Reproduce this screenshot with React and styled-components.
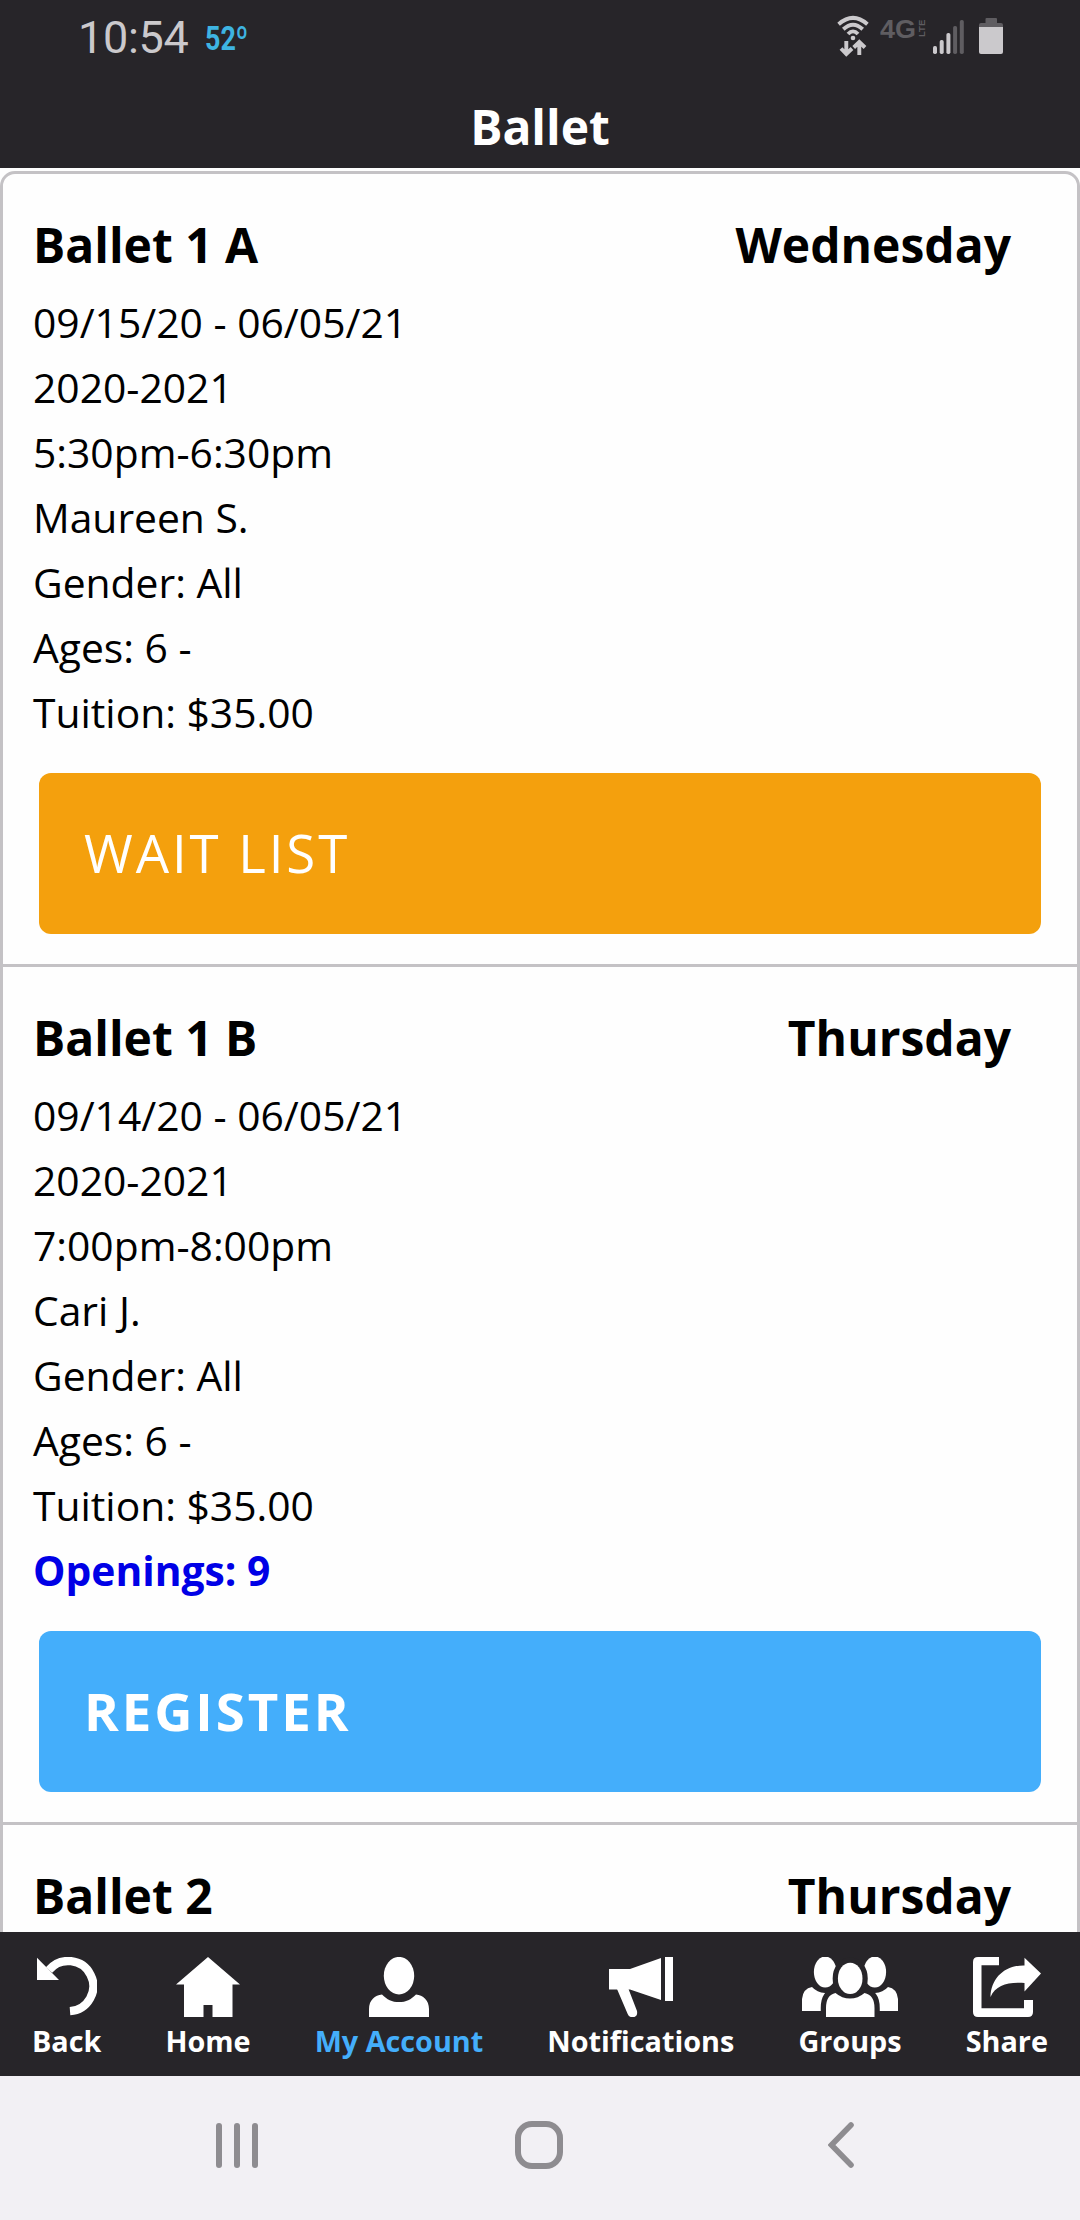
import React from "react";
import styled, { createGlobalStyle } from "styled-components";

const ink = "#272529";
const line = "#c4c2c5";
const dim = "#5f5d61";
const light = "#cbc9cc";

const GlobalStyle = createGlobalStyle`
  * { box-sizing: border-box; }
  body { margin: 0; background: #fefefe; }
`;

const Screen = styled.div`
  width: 1080px;
  height: 2220px;
  display: flex;
  flex-direction: column;
  overflow: hidden;
  background: #fefefe;
  color: #000;
  font-family: "Open Sans", "Noto Sans", sans-serif;
`;

const StatusBar = styled.div`
  flex: none;
  height: 76px;
  padding: 0 77px 0 78px;
  display: flex;
  justify-content: space-between;
  background: ${ink};
`;

const StatusGroup = styled.div`
  display: flex;
  align-items: flex-start;
`;

const Clock = styled.span`
  width: 127px;
  padding-top: 11px;
  font: 400 45px/53px Roboto, sans-serif;
  letter-spacing: -0.3px;
  color: ${light};
`;

const Temperature = styled.span`
  padding-top: 18px;
  font: 700 34px/40px Roboto, sans-serif;
  color: #3eb4e2;
  transform: scaleX(0.79);
  transform-origin: left;
`;

const Network = styled.div`
  display: flex;
  width: 64px;
  padding: 15px 0 0 11px;
  color: ${dim};
`;

const NetworkName = styled.span`
  flex: none;
  width: 37px;
  font: 700 25px/28px "Liberation Sans", sans-serif;
  transform: scaleX(1.08);
  transform-origin: left;
`;

const NetworkSuffix = styled.span`
  height: 19px;
  margin-top: 3px;
  writing-mode: vertical-rl;
  transform: rotate(180deg);
  font: 700 9.5px/9px "Liberation Sans", sans-serif;
`;

const Header = styled.header`
  flex: none;
  height: 92px;
  padding-top: 18px;
  background: ${ink};
  color: #fff;
  text-align: center;
  font-size: 48px;
  font-weight: 700;
  line-height: 66px;
`;

const List = styled.main`
  flex: 1;
  min-height: 0;
  overflow: hidden;
  padding-top: 3px;
`;

const Cards = styled.div`
  border: 3px solid ${line};
  border-radius: 15px;
`;

const Card = styled.section`
  padding: 38px 36px 30px 30px;
  & + & { border-top: 3px solid ${line}; }
`;

const CardTitle = styled.div`
  display: flex;
  justify-content: space-between;
  margin-bottom: 12px;
  padding-right: 30px;
  font-size: 48px;
  font-weight: 700;
  line-height: 66px;
`;

const Detail = styled.div`
  height: 65px;
  font-size: 40.8px;
  line-height: 65px;
  white-space: pre;
  font-weight: ${(p) => (p.$open ? 700 : 400)};
  color: ${(p) => (p.$open ? "#0000e6" : "#000")};
`;

const Action = styled.button`
  display: block;
  width: 1002px;
  height: 161px;
  margin: 28px 0 0 6px;
  padding: 0 0 2px 45px;
  border: 0;
  border-radius: 12px;
  background: ${(p) => (p.$wait ? "#f4a00d" : "#44aefb")};
  color: #fff;
  text-align: left;
  font-family: inherit;
  font-size: 52.8px;
  font-weight: ${(p) => (p.$wait ? 400 : 700)};
  letter-spacing: 2.9px;
`;

const TabBar = styled.nav`
  flex: none;
  height: 144px;
  padding: 25px 32px 0;
  display: flex;
  justify-content: space-between;
  background: ${ink};
`;

const Tab = styled.div`
  display: flex;
  flex-direction: column;
  align-items: center;
  gap: 4px;
  font-size: 28.8px;
  font-weight: 700;
  line-height: 40px;
  color: ${(p) => (p.$active ? "#44aefb" : "#fff")};
  svg { display: block; fill: #fff; }
`;

const SystemNav = styled.div`
  flex: none;
  height: 144px;
  padding: 0 226px 6px 216px;
  display: flex;
  align-items: center;
  justify-content: space-between;
  background: #f2f0f4;
`;

const Recents = styled.div`
  display: flex;
  gap: 12px;
`;

const RecentBar = styled.i`
  width: 6px;
  height: 45px;
  border-radius: 3px;
  background: #8e8c90;
`;

const HomeKey = styled.div`
  width: 48px;
  height: 48px;
  margin-right: 8px;
  border: 6px solid #8e8c90;
  border-radius: 17px;
`;

const WifiIcon = () => (
  <svg width="32" height="60" viewBox="0 0 32 60">
    <g fill="none" stroke={light} strokeWidth="3.9">
      <path d="M1.6 24.2Q16 11.6 30.4 24.2" />
      <path d="M6.3 29.2Q16 20.2 25.7 29.2" />
      <path d="M11 34Q16 28.8 21 34" />
      <path d="M9.3 41V53M4 48.5L9.3 54L15 48.5" />
      <path d="M22.3 55V43M16.7 47.5L22.3 42L28 47.5" />
    </g>
    <circle cx="16" cy="38" r="2.3" fill={light} />
  </svg>
);

const SignalIcon = () => (
  <svg width="31" height="60" viewBox="0 0 31 60">
    {[46, 40, 33, 26, 20].map((y, i) => (
      <rect key={y} x={i * 6.7} y={y} width="4" height={54 - y} rx="1.7" fill={i < 3 ? light : dim} />
    ))}
  </svg>
);

const BatteryIcon = () => (
  <svg width="24" height="60" viewBox="0 0 24 60">
    <path d="M6.5 23V19Q6.5 18 7.5 18H17Q18 18 18 19V23H22Q24 23 24 25V28H0V25Q0 23 2 23Z" fill={dim} />
    <path d="M0 27H24V52Q24 54 22 54H2Q0 54 0 52Z" fill={light} />
  </svg>
);

const StatusIcons = styled(StatusGroup)`
  & > svg:nth-of-type(2) { margin-right: 15px; }
`;

const BackIcon = () => (
  <svg width="60" height="60" viewBox="0 0 60 60">
    <path d="M0 .7V23H22Z" />
    <path d="M12 13A25.1 25.1 0 1 1 33 54.2" fill="none" stroke="#fff" strokeWidth="8.3" />
  </svg>
);

const HomeIcon = () => (
  <svg width="64" height="60" viewBox="0 0 64 60">
    <path d="M32 0L64 27.5H56.5V60H36.5V48H27.5V60H8V27.5H0Z" />
  </svg>
);

const AccountIcon = () => (
  <svg width="60" height="60" viewBox="0 0 60 60">
    <ellipse cx="30" cy="18.7" rx="15.2" ry="18.8" />
    <path d="M0 60V52C0 43 6 38 13 37.4C18 42.5 23 45 30 45S42 42.5 47 37.4C54 38 60 43 60 52V60Z" />
  </svg>
);

const MegaphoneIcon = () => (
  <svg width="64" height="60" viewBox="0 0 64 60">
    <path d="M0 12H21L52 1V43L21 32.5H0Z" />
    <path d="M56 0H64V44H56Z" />
    <path d="M8 32H19.5L28 54Q29 60 24 60.2Q20 60.5 18.7 57Z" />
  </svg>
);

const GroupsIcon = () => (
  <svg width="96" height="60" viewBox="0 0 96 60">
    <ellipse cx="23.2" cy="15" rx="11.3" ry="15.5" />
    <ellipse cx="72.8" cy="15" rx="11.3" ry="15.5" />
    <path d="M0 54V42Q1 31.5 10 30Q15 35.5 23 36V54ZM96 54V42Q95 31.5 86 30Q81 35.5 73 36V54Z" />
    <g fill={ink} stroke={ink} strokeWidth="10.5">
      <path d="M24 66V51Q24 38 33.5 36Q40 41.5 48 41.5T62.5 36Q72.500 38 72.5 51V66Z" />
      <ellipse cx="48.2" cy="21.4" rx="12.3" ry="15.7" />
    </g>
    <ellipse cx="48.2" cy="21.4" rx="12.3" ry="15.7" />
    <path d="M24 60V51Q24 38 33.5 36Q40 41.5 48 41.5T62.5 36Q72.5 38 72.5 51V60Z" />
  </svg>
);

const ShareIcon = () => (
  <svg width="68" height="60" viewBox="0 0 68 60">
    <path d="M26 0V8.3H8.5V51.3H51V43H60V55Q60 60 55 60H5Q0 60 0 55V5Q0 0 5 0Z" />
    <path d="M51.5 .7L68 16.5L51.5 34.5V26C35 25 23 28 17.5 40C18 21 32 8 51.5 8.5Z" />
  </svg>
);

const BackKey = () => (
  <svg width="26" height="48" viewBox="0 0 26 48" fill="none" stroke="#8e8c90" strokeWidth="5.6" strokeLinecap="round" strokeLinejoin="miter">
    <path d="M23 4L3.5 24L23 44" />
  </svg>
);

const classes = [
  {
    name: "Ballet 1 A",
    day: "Wednesday",
    details: ["09/15/20 - 06/05/21", "2020-2021", "5:30pm-6:30pm", "Maureen S.", "Gender: All", "Ages: 6 -", "Tuition: $35.00"],
    action: "WAIT LIST",
    wait: true,
  },
  {
    name: "Ballet 1 B",
    day: "Thursday",
    details: ["09/14/20 - 06/05/21", "2020-2021", "7:00pm-8:00pm", "Cari J.", "Gender: All", "Ages: 6 -", "Tuition: $35.00"],
    openings: "Openings: 9",
    action: "REGISTER",
  },
  { name: "Ballet 2", day: "Thursday", details: [] },
];

const tabs = [
  ["Back", BackIcon],
  ["Home", HomeIcon],
  ["My Account", AccountIcon],
  ["Notifications", MegaphoneIcon],
  ["Groups", GroupsIcon],
  ["Share", ShareIcon],
];

export default function App() {
  return (
    <Screen>
      <GlobalStyle />
      <StatusBar>
        <StatusGroup>
          <Clock>10:54</Clock>
          <Temperature>52º</Temperature>
        </StatusGroup>
        <StatusIcons>
          <WifiIcon />
          <Network>
            <NetworkName>4G</NetworkName>
            <NetworkSuffix>LTE</NetworkSuffix>
          </Network>
          <SignalIcon />
          <BatteryIcon />
        </StatusIcons>
      </StatusBar>
      <Header>Ballet</Header>
      <List>
        <Cards>
          {classes.map((c) => (
            <Card key={c.name}>
              <CardTitle>
                <span>{c.name}</span>
                <span>{c.day}</span>
              </CardTitle>
              {c.details.map((d) => (
                <Detail key={d}>{d}</Detail>
              ))}
              {c.openings && <Detail $open>{c.openings}</Detail>}
              {c.action && <Action $wait={c.wait}>{c.action}</Action>}
            </Card>
          ))}
        </Cards>
      </List>
      <TabBar>
        {tabs.map(([label, Icon]) => (
          <Tab key={label} $active={label === "My Account"}>
            <Icon />
            <span>{label}</span>
          </Tab>
        ))}
      </TabBar>
      <SystemNav>
        <Recents>
          <RecentBar />
          <RecentBar />
          <RecentBar />
        </Recents>
        <HomeKey />
        <BackKey />
      </SystemNav>
    </Screen>
  );
}
